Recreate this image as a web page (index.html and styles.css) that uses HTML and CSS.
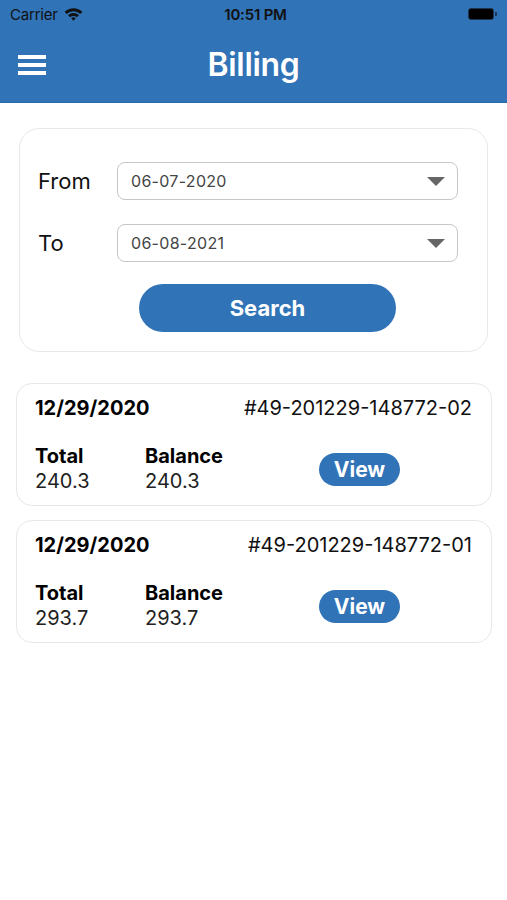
FILE: index.html
```html
<!DOCTYPE html>
<html lang="en">
<head>
    <meta charset="UTF-8">
    <meta name="viewport" content="width=device-width, initial-scale=1.0">
    <title>Billing</title>
    <link rel="stylesheet" href="styles.css">
</head>
<body>
    <div class="header">
        <div class="status-bar">
            <div class="carrier">
                Carrier
                <svg class="wifi" width="19" height="14" viewBox="0 0 18 13">
                    <path d="M0.6 4.4 A12 12 0 0 1 17.4 4.4 L15.4 6.5 A9 9 0 0 0 2.6 6.5 Z" fill="#111"/>
                    <path d="M3.8 7.6 A7.4 7.4 0 0 1 14.2 7.6 L12.2 9.6 A4.6 4.6 0 0 0 5.8 9.6 Z" fill="#111"/>
                    <path d="M6.9 10.6 A3 3 0 0 1 11.1 10.6 L9 12.8 Z" fill="#111"/>
                </svg>
            </div>
            <div class="time">10:51 PM</div>
            <div class="battery">
                <span class="battery-body"></span>
                <span class="battery-tip"></span>
            </div>
        </div>
        <div class="nav-bar">
            <div class="menu-icon">
                <span></span>
                <span></span>
                <span></span>
            </div>
            <h1>Billing</h1>
        </div>
    </div>

    <div class="search-card">
        <div class="field-row">
            <label>From</label>
            <div class="date-select">
                <span>06-07-2020</span>
                <span class="caret"></span>
            </div>
        </div>
        <div class="field-row">
            <label>To</label>
            <div class="date-select">
                <span>06-08-2021</span>
                <span class="caret"></span>
            </div>
        </div>
        <button class="search-btn">Search</button>
    </div>

    <div class="bill-list">
        <div class="bill-card">
            <div class="bill-top">
                <span class="bill-date">12/29/2020</span>
                <span class="bill-number">#49-201229-148772-02</span>
            </div>
            <div class="bill-bottom">
                <div class="amount total">
                    <div class="amount-label">Total</div>
                    <div class="amount-value">240.3</div>
                </div>
                <div class="amount balance">
                    <div class="amount-label">Balance</div>
                    <div class="amount-value">240.3</div>
                </div>
                <button class="view-btn">View</button>
            </div>
        </div>
        <div class="bill-card">
            <div class="bill-top">
                <span class="bill-date">12/29/2020</span>
                <span class="bill-number">#49-201229-148772-01</span>
            </div>
            <div class="bill-bottom">
                <div class="amount total">
                    <div class="amount-label">Total</div>
                    <div class="amount-value">293.7</div>
                </div>
                <div class="amount balance">
                    <div class="amount-label">Balance</div>
                    <div class="amount-value">293.7</div>
                </div>
                <button class="view-btn">View</button>
            </div>
        </div>
    </div>
</body>
</html>
```

FILE: styles.css
```css
/* Reset */
* {
    margin: 0;
    padding: 0;
    box-sizing: border-box;
}

body {
    font-family: 'Inter', 'Noto Sans', sans-serif;
    background-color: #fff;
    color: #000;
    width: 507px;
}

/* Header with status bar */
.header {
    background-color: #3073b7;
    height: 103px;
    border-bottom: 1px solid #2a67a6;
}

.status-bar {
    height: 28px;
    display: flex;
    align-items: center;
    justify-content: space-between;
    padding: 0 10px 0 10px;
    color: #111;
    font-size: 15px;
}

.carrier {
    display: flex;
    align-items: center;
    gap: 6px;
    width: 110px;
    letter-spacing: -0.2px;
}

.time {
    font-weight: 600;
    letter-spacing: -0.2px;
    margin-left: 4px;
}

.battery {
    width: 110px;
    display: flex;
    justify-content: flex-end;
    align-items: center;
}

.battery-body {
    width: 26px;
    height: 12px;
    background-color: #000;
    border: 1px solid #1d3550;
    border-radius: 3px;
}

.battery-tip {
    width: 2px;
    height: 4px;
    background-color: #1d3550;
    border-radius: 0 1px 1px 0;
    margin-left: 1px;
}

.nav-bar {
    height: 74px;
    display: flex;
    align-items: center;
    position: relative;
    padding-left: 18px;
    padding-bottom: 1px;
}

.menu-icon {
    display: flex;
    flex-direction: column;
    gap: 4px;
    margin-top: 1px;
}

.menu-icon span {
    display: block;
    width: 28px;
    height: 4px;
    background-color: #fff;
}

.nav-bar h1 {
    position: absolute;
    left: 0;
    right: 0;
    text-align: center;
    color: #fff;
    font-size: 32px;
    font-weight: 600;
    letter-spacing: -0.3px;
    pointer-events: none;
}

/* Search card */
.search-card {
    margin: 25px 19px 0 19px;
    border: 1px solid #e8e8e8;
    border-radius: 20px;
    padding: 33px 29px 19px 18px;
}

.field-row {
    display: flex;
    align-items: center;
    margin-bottom: 24px;
}

.field-row label {
    width: 79px;
    font-size: 22px;
    color: #111;
}

.date-select {
    flex: 1;
    height: 38px;
    border: 1px solid #c6c6c6;
    border-radius: 8px;
    display: flex;
    align-items: center;
    justify-content: space-between;
    padding: 0 12px 0 13px;
    font-size: 16px;
    color: #444;
    letter-spacing: 0.3px;
}

.caret {
    width: 0;
    height: 0;
    border-left: 9px solid transparent;
    border-right: 9px solid transparent;
    border-top: 9px solid #666;
}

.search-btn {
    display: block;
    width: 257px;
    height: 48px;
    margin: -2px 0 0 101px;
    background-color: #3073b7;
    color: #fff;
    border: none;
    border-radius: 24px;
    font-family: inherit;
    font-size: 22px;
    font-weight: 700;
}

/* Bill cards */
.bill-list {
    margin: 31px 15px 0 16px;
    display: flex;
    flex-direction: column;
    gap: 14px;
}

.bill-card {
    border: 1px solid #e8e8e8;
    border-radius: 16px;
    padding: 12px 19px 11px 18px;
}

.bill-top {
    display: flex;
    justify-content: space-between;
    align-items: center;
    line-height: 24px;
    font-size: 20px;
}

.bill-date {
    font-weight: 700;
}

.bill-number {
    color: #111;
}

.bill-bottom {
    display: flex;
    align-items: center;
    margin-top: 24px;
}

.amount {
    font-size: 20px;
    line-height: 25px;
}

.total {
    width: 110px;
}

.balance {
    width: 174px;
}

.amount-label {
    font-weight: 700;
}

.amount-value {
    color: #222;
}

.view-btn {
    width: 81px;
    height: 33px;
    background-color: #3073b7;
    color: #fff;
    border: none;
    border-radius: 17px;
    font-family: inherit;
    font-size: 21px;
    font-weight: 700;
}
```
